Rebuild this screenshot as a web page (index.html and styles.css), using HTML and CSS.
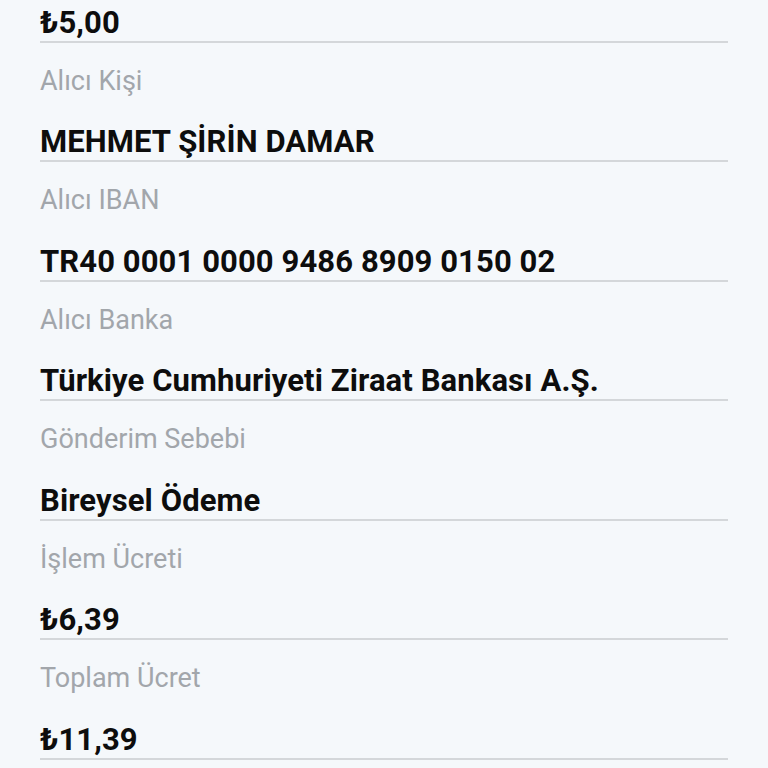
FILE: index.html
```html
<!DOCTYPE html>
<html>
<head>
    <meta charset="UTF-8">
    <title>İşlem Özeti</title>
    <link rel="stylesheet" href="styles.css">
</head>
<body>
    <div class="summary">
        <div class="row first">
            <div class="value">₺5,00</div>
        </div>
        <div class="row">
            <div class="label">Alıcı Kişi</div>
            <div class="value">MEHMET ŞİRİN DAMAR</div>
        </div>
        <div class="row">
            <div class="label">Alıcı IBAN</div>
            <div class="value">TR40 0001 0000 9486 8909 0150 02</div>
        </div>
        <div class="row">
            <div class="label">Alıcı Banka</div>
            <div class="value">Türkiye Cumhuriyeti Ziraat Bankası A.Ş.</div>
        </div>
        <div class="row">
            <div class="label">Gönderim Sebebi</div>
            <div class="value">Bireysel Ödeme</div>
        </div>
        <div class="row">
            <div class="label">İşlem Ücreti</div>
            <div class="value">₺6,39</div>
        </div>
        <div class="row">
            <div class="label">Toplam Ücret</div>
            <div class="value">₺11,39</div>
        </div>
    </div>
</body>
</html>
```

FILE: styles.css
```css
body {
    font-family: Roboto, "Noto Sans", sans-serif;
    background-color: #f5f8fb;
    margin: 0;
    padding: 0;
}

.summary {
    padding: 0 40px;
}

.row {
    padding-top: 22px;
    border-bottom: 2px solid #d4d7da;
}

.row.first {
    padding-top: 4.5px;
}

.label {
    font-size: 27px;
    line-height: 32px;
    color: #a2a6ab;
}

.value {
    margin-top: 27.5px;
    font-size: 31px;
    line-height: 36px;
    font-weight: bold;
    letter-spacing: 0.1px;
    color: #0d0d0d;
}

.row.first .value {
    margin-top: 0;
}
```
